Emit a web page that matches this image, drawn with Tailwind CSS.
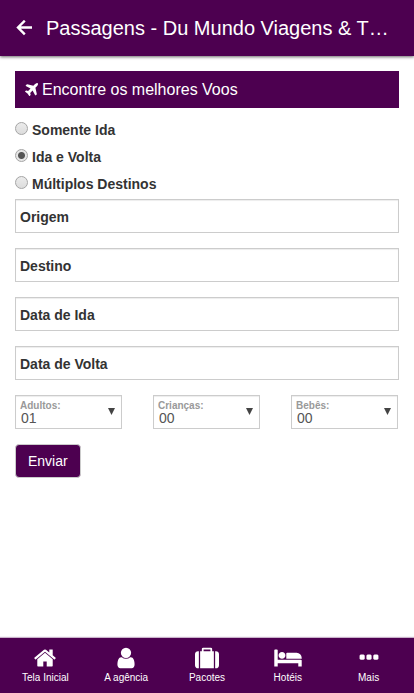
<!DOCTYPE html>
<html lang="pt-BR">
<head>
<meta charset="utf-8">
<meta name="viewport" content="width=device-width, initial-scale=1">
<title>Passagens - Du Mundo Viagens &amp; Turismo</title>
<script src="https://cdn.jsdelivr.net/npm/@tailwindcss/browser@4"></script>
</head>
<body class="flex min-h-screen flex-col bg-white font-['Liberation_Sans',Arial,sans-serif] text-[#333]">

<header class="flex h-14 shrink-0 items-center bg-[#4d0050] pl-4 pr-6 text-white shadow-[0_1px_3px_rgba(0,0,0,0.6)]">
  <button type="button" aria-label="Voltar" class="mr-3.5 shrink-0">
    <svg class="size-4" viewBox="0 0 16 16" fill="none" stroke="currentColor" stroke-width="2.4"><path d="M16 7.5H2M8.8 .7 2 7.5l6.8 6.8"/></svg>
  </button>
  <h1 class="min-w-0 truncate text-xl">Passagens - Du Mundo Viagens &amp; T…</h1>
</header>

<main class="flex-1 px-[15px] pt-[15px]">
  <h2 class="flex h-[37px] items-center gap-1 bg-[#4d0050] px-2.5 text-base text-white">
    <svg class="size-[13px] shrink-0" viewBox="185 128 1408 1408" fill="currentColor" aria-hidden="true"><path d="M1568 160q44 52 12 148t-108 172l-161 161 160 696q5 19-12 33l-128 96q-7 6-19 6-4 0-7-1-15-3-21-16l-279-508-259 259 53 194q5 17-8 31l-96 96q-9 9-23 9h-2q-15-2-24-13l-189-252-252-189q-11-7-13-23-1-13 9-25l96-97q9-9 23-9 6 0 8 1l194 53 259-259-508-279q-14-8-17-24-2-16 9-27l128-128q14-13 30-8l665 159 160-160q76-76 172-108t148 12z"/></svg>
    Encontre os melhores Voos
  </h2>

  <form>
    <div class="flex flex-col gap-[7px] pt-3 pb-[5px] text-sm leading-5 font-bold">
      <label class="flex gap-1"><input type="radio" name="tipo" class="mt-0.5 size-[13px] appearance-none rounded-full border border-[#a5a5a5] bg-linear-to-b from-[#ececec] to-[#dcdcdc] checked:bg-[radial-gradient(circle,#555_0_3px,#e6e6e6_4px)]">Somente Ida</label>
      <label class="flex gap-1"><input type="radio" name="tipo" checked class="mt-0.5 size-[13px] appearance-none rounded-full border border-[#a5a5a5] bg-linear-to-b from-[#ececec] to-[#dcdcdc] checked:bg-[radial-gradient(circle,#555_0_3px,#e6e6e6_4px)]">Ida e Volta</label>
      <label class="flex gap-1"><input type="radio" name="tipo" class="mt-0.5 size-[13px] appearance-none rounded-full border border-[#a5a5a5] bg-linear-to-b from-[#ececec] to-[#dcdcdc] checked:bg-[radial-gradient(circle,#555_0_3px,#e6e6e6_4px)]">Múltiplos Destinos</label>
    </div>

    <div class="flex flex-col gap-[15px] text-sm font-bold">
      <input type="text" aria-label="Origem" placeholder="Origem" class="h-[34px] w-full border border-[#ccc] px-1 pt-0.5 shadow-[inset_0_1px_1px_rgba(0,0,0,0.075)] placeholder:text-[#333]">
      <input type="text" aria-label="Destino" placeholder="Destino" class="h-[34px] w-full border border-[#ccc] px-1 pt-0.5 shadow-[inset_0_1px_1px_rgba(0,0,0,0.075)] placeholder:text-[#333]">
      <input type="text" aria-label="Data de Ida" placeholder="Data de Ida" class="h-[34px] w-full border border-[#ccc] px-1 pt-0.5 shadow-[inset_0_1px_1px_rgba(0,0,0,0.075)] placeholder:text-[#333]">
      <input type="text" aria-label="Data de Volta" placeholder="Data de Volta" class="h-[34px] w-full border border-[#ccc] px-1 pt-0.5 shadow-[inset_0_1px_1px_rgba(0,0,0,0.075)] placeholder:text-[#333]">
    </div>

    <div class="mt-[15px] grid grid-cols-3 gap-[31px] pr-px">
      <div class="relative h-[34px] border border-[#ccc] shadow-[inset_0_1px_1px_rgba(0,0,0,0.075)]">
        <label for="adultos" class="absolute top-1 left-1 text-[10px] leading-3 font-bold text-[#999]">Adultos:</label>
        <select id="adultos" class="h-full w-full appearance-none pt-3 pl-[5px] text-sm text-[#555]"><option>01</option><option>02</option></select>
        <svg class="pointer-events-none absolute top-3 right-1.5 h-[7px] w-[7px]" viewBox="0 0 7 7" fill="#444" aria-hidden="true"><path d="M0 0h7L3.5 7z"/></svg>
      </div>
      <div class="relative h-[34px] border border-[#ccc] shadow-[inset_0_1px_1px_rgba(0,0,0,0.075)]">
        <label for="criancas" class="absolute top-1 left-1 text-[10px] leading-3 font-bold text-[#999]">Crianças:</label>
        <select id="criancas" class="h-full w-full appearance-none pt-3 pl-[5px] text-sm text-[#555]"><option>00</option><option>01</option></select>
        <svg class="pointer-events-none absolute top-3 right-1.5 h-[7px] w-[7px]" viewBox="0 0 7 7" fill="#444" aria-hidden="true"><path d="M0 0h7L3.5 7z"/></svg>
      </div>
      <div class="relative h-[34px] border border-[#ccc] shadow-[inset_0_1px_1px_rgba(0,0,0,0.075)]">
        <label for="bebes" class="absolute top-1 left-1 text-[10px] leading-3 font-bold text-[#999]">Bebês:</label>
        <select id="bebes" class="h-full w-full appearance-none pt-3 pl-[5px] text-sm text-[#555]"><option>00</option><option>01</option></select>
        <svg class="pointer-events-none absolute top-3 right-1.5 h-[7px] w-[7px]" viewBox="0 0 7 7" fill="#444" aria-hidden="true"><path d="M0 0h7L3.5 7z"/></svg>
      </div>
    </div>

    <button type="submit" class="mt-[15px] h-[34px] rounded border border-[#ccc] bg-[#4d0050] px-3 text-sm text-white">Enviar</button>
  </form>
</main>

<nav class="grid h-[55px] shrink-0 grid-cols-5 bg-[#4d0050] px-[5px] pt-2 text-center text-[10px] leading-4 text-white shadow-[0_-1px_1px_rgba(77,0,80,0.3)]">
  <a href="#" class="flex flex-col items-center"><svg class="h-6 w-6" viewBox="0 0 1792 1792" fill="currentColor" aria-hidden="true"><path d="M1472 992v480q0 26-19 45t-45 19h-384v-384h-256v384h-384q-26 0-45-19t-19-45v-480q0-1 .5-3t.5-3l575-474 575 474q1 2 1 6zm223-69l-62 74q-8 9-21 11h-3q-13 0-21-7l-692-577-692 577q-12 8-24 7-13-2-21-11l-62-74q-8-10-7-23.5t11-21.5l719-599q32-26 76-26t76 26l244 204v-195q0-14 9-23t23-9h192q14 0 23 9t9 23v408l219 182q10 8 11 21.5t-7 23.5z"/></svg>Tela Inicial</a>
  <a href="#" class="flex flex-col items-center"><svg class="h-6 w-6" viewBox="0 0 1792 1792" fill="currentColor" aria-hidden="true"><path d="M1536 1399q0 109-62.5 187t-150.5 78h-854q-88 0-150.5-78t-62.5-187q0-85 8.5-160.5t31.5-152 58.5-131 94-89 134.5-34.5q131 128 313 128t313-128q76 0 134.5 34.5t94 89 58.5 131 31.5 152 8.5 160.5zm-256-887q0 159-112.5 271.5t-271.5 112.5-271.5-112.5-112.5-271.5 112.5-271.5 271.5-112.5 271.5 112.5 112.5 271.5z"/></svg>A agência</a>
  <a href="#" class="flex flex-col items-center"><svg class="h-6 w-6" viewBox="0 0 1792 1792" fill="currentColor" aria-hidden="true"><path d="M640 384h512v-128h-512v128zm-352 0v1280h-64q-92 0-158-66t-66-158v-832q0-92 66-158t158-66h64zm1120 0v1280h-1024v-1280h128v-160q0-40 28-68t68-28h576q40 0 68 28t28 68v160h128zm384 224v832q0 92-66 158t-158 66h-64v-1280h64q92 0 158 66t66 158z"/></svg>Pacotes</a>
  <a href="#" class="flex flex-col items-center"><svg class="h-6 w-7" viewBox="0 0 2048 1792" fill="currentColor" aria-hidden="true"><path d="M256 1024h1728q26 0 45 19t19 45v448h-256v-256h-1536v256h-256v-1216q0-26 19-45t45-19h128q26 0 45 19t19 45v704zm576-320q0-106-75-181t-181-75-181 75-75 181 75 181 181 75 181-75 75-181zm1216 256v-64q0-159-112.5-271.5t-271.5-112.5h-704q-26 0-45 19t-19 45v384h1152z"/></svg>Hotéis</a>
  <a href="#" class="flex flex-col items-center"><svg class="h-6 w-6" viewBox="0 0 1792 1792" fill="currentColor" aria-hidden="true"><path d="M576 736v192q0 40-28 68t-68 28h-192q-40 0-68-28t-28-68v-192q0-40 28-68t68-28h192q40 0 68 28t28 68zm512 0v192q0 40-28 68t-68 28h-192q-40 0-68-28t-28-68v-192q0-40 28-68t68-28h192q40 0 68 28t28 68zm512 0v192q0 40-28 68t-68 28h-192q-40 0-68-28t-28-68v-192q0-40 28-68t68-28h192q40 0 68 28t28 68z"/></svg>Mais</a>
</nav>
</body>
</html>
